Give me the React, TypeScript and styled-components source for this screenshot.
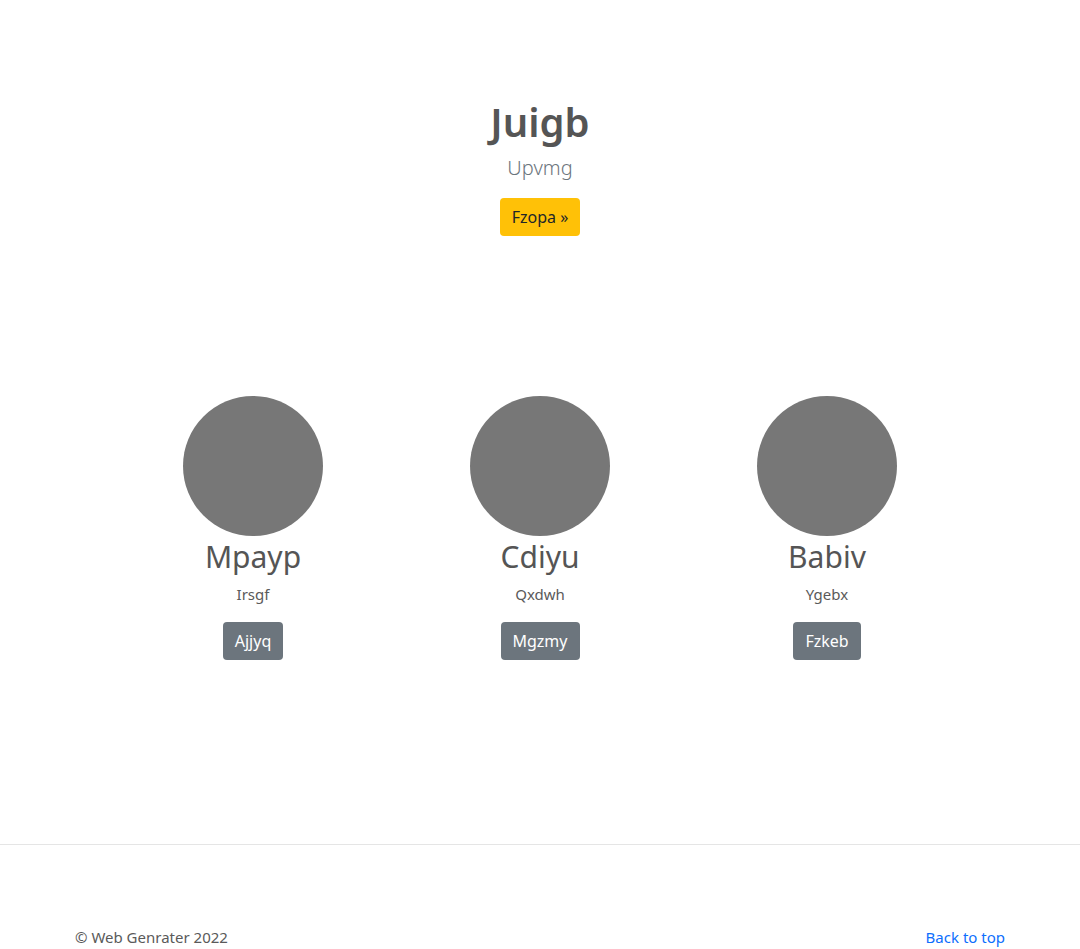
import React from "react";
import styled, { createGlobalStyle } from "styled-components";

const Global = createGlobalStyle`
  html, body { margin: 0; padding: 0; background: #fff; }
  body {
    font-family: "Noto Sans", "Open Sans", sans-serif;
    color: #5a5a5a;
    font-size: 16px;
    line-height: 1.5;
  }
`;

const Page = styled.div`
  display: flex;
  flex-direction: column;
  height: 949px;
  overflow: hidden;
`;

const Hero = styled.section`
  display: flex;
  flex-direction: column;
  align-items: center;
  padding-top: 98px;
`;

const Title = styled.h1`
  margin: 0;
  font-size: 40px;
  line-height: 48px;
  font-weight: 600;
  color: #555;
`;

const Lead = styled.p`
  margin: 7px 0 0;
  font-size: 20px;
  line-height: 30px;
  font-weight: 300;
  color: #6c757d;
`;

const Button = styled.a<{ $variant: "warning" | "secondary" }>`
  display: inline-flex;
  align-items: center;
  justify-content: center;
  height: 38px;
  box-sizing: border-box;
  padding: 0 12px;
  border-radius: 4px;
  font-size: 16px;
  text-decoration: none;
  background: ${(p) => (p.$variant === "warning" ? "#ffc107" : "#6c757d")};
  color: ${(p) => (p.$variant === "warning" ? "#212529" : "#fff")};
`;

const HeroButton = styled(Button)`
  margin-top: 15px;
`;

const Marketing = styled.section`
  display: grid;
  grid-template-columns: repeat(3, 287px);
  justify-content: center;
  margin-top: 160px;
`;

const Col = styled.div`
  display: flex;
  flex-direction: column;
  align-items: center;
  text-align: center;
`;

const Avatar = styled.div`
  width: 140px;
  height: 140px;
  border-radius: 50%;
  background: #777;
`;

const Name = styled.h2`
  margin: 2px 0 0;
  font-size: 30px;
  line-height: 38px;
  font-weight: 400;
  color: #555;
`;

const Sub = styled.p`
  margin: 6px 0 0;
  font-size: 15px;
  line-height: 24px;
`;

const ColButton = styled(Button)`
  margin-top: 16px;
`;

const Divider = styled.hr`
  margin: 184px 0 0;
  border: 0;
  border-top: 1px solid #e5e5e5;
  height: 0;
`;

const Footer = styled.footer`
  display: flex;
  justify-content: space-between;
  width: 930px;
  margin: 80px auto 0;
  font-size: 15px;
  line-height: 24px;
`;

const TopLink = styled.a`
  color: #0d6efd;
  text-decoration: none;
`;

const people = [
  { name: "Mpayp", sub: "Irsgf", btn: "Ajjyq" },
  { name: "Cdiyu", sub: "Qxdwh", btn: "Mgzmy" },
  { name: "Babiv", sub: "Ygebx", btn: "Fzkeb" },
];

export default function App() {
  return (
    <>
      <Global />
      <Page>
        <Hero>
          <Title>Juigb</Title>
          <Lead>Upvmg</Lead>
          <HeroButton $variant="warning" href="#">
            Fzopa »
          </HeroButton>
        </Hero>
        <Marketing>
          {people.map((p) => (
            <Col key={p.name}>
              <Avatar />
              <Name>{p.name}</Name>
              <Sub>{p.sub}</Sub>
              <ColButton $variant="secondary" href="#">
                {p.btn}
              </ColButton>
            </Col>
          ))}
        </Marketing>
        <Divider />
        <Footer>
          <span>© Web Genrater 2022</span>
          <TopLink href="#">Back to top</TopLink>
        </Footer>
      </Page>
    </>
  );
}
